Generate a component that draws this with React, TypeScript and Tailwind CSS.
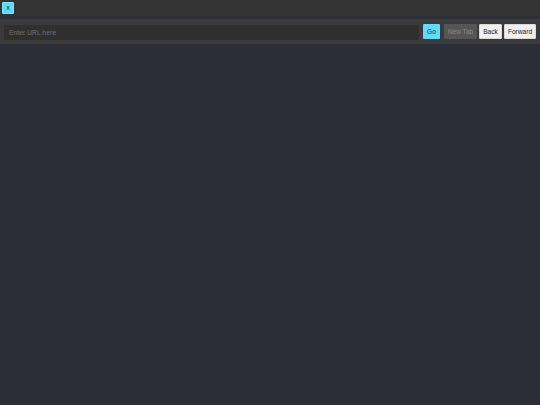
import React from "react";

export default function App() {
  return (
    <div className="w-[540px] h-[405px] bg-[#2b2e36] flex flex-col" style={{ fontFamily: '"Liberation Sans", Arial, sans-serif' }}>
      <div className="h-[16px] bg-[#333333] flex items-center pl-[2px]">
        <button className="w-[12px] h-[12px] pt-[1px] bg-[#61dafb] text-[#222] text-[6.5px] leading-none flex items-center justify-center rounded-[1px] border border-[#7fe3ff]">
          x
        </button>
      </div>
      <div className="h-[3px]" />
      <div className="h-[25px] bg-[#3a3a3a] flex items-start pl-[4px] pr-[4px]">
        <div className="mt-[6px] flex-1 h-[15px] pt-[2px] bg-[#2f2f2f] flex items-center pl-[5px]">
          <span className="text-[6.8px] leading-none text-[#6f6f6f]">Enter URL here</span>
        </div>
        <button className="mt-[5px] pt-[2px] ml-[4px] w-[17px] h-[15px] bg-[#61dafb] text-[#1f2d3a] text-[6.6px] leading-none flex items-center justify-center rounded-[1px]">
          Go
        </button>
        <button className="mt-[5px] pt-[2px] ml-[4px] w-[33px] h-[15px] bg-[#555555] text-[#8a8a8a] text-[6.6px] leading-none flex items-center justify-center rounded-[1px]">
          New Tab
        </button>
        <button className="mt-[5px] pt-[2px] ml-[2px] w-[23px] h-[15px] bg-[#f0f0f0] text-[#222] text-[6.6px] leading-none flex items-center justify-center rounded-[1px] border border-[#d8d8d8]">
          Back
        </button>
        <button className="mt-[5px] pt-[2px] ml-[2px] w-[32px] h-[15px] bg-[#f0f0f0] text-[#222] text-[6.6px] leading-none flex items-center justify-center rounded-[1px] border border-[#d8d8d8]">
          Forward
        </button>
      </div>
      <div className="flex-1" />
    </div>
  );
}
